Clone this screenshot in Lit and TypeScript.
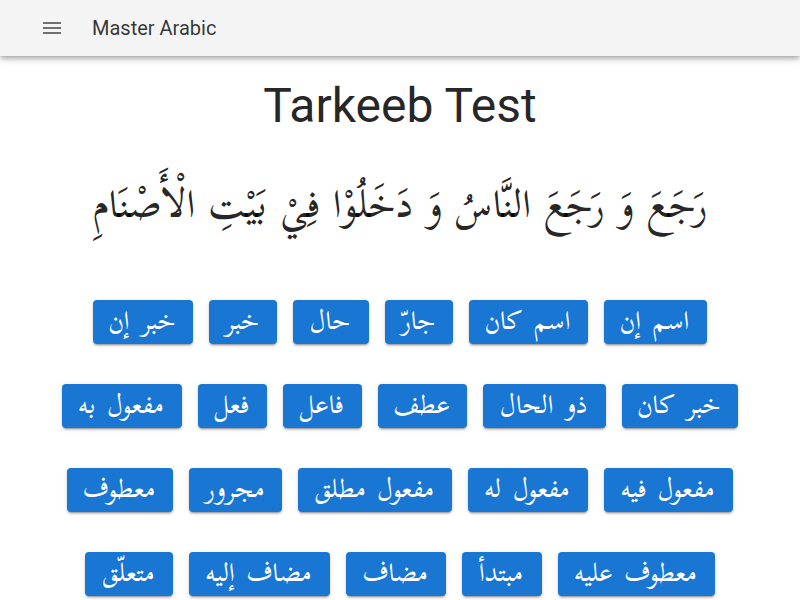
import { LitElement, html, css } from "lit";
import { customElement } from "lit/decorators.js";

const rows: { label: string; width: number }[][] = [
  [["اسم إن", 103], ["اسم كان", 119], ["جارّ", 68], ["حال", 76], ["خبر", 68], ["خبر إن", 100]],
  [["خبر كان", 116], ["ذو الحال", 123], ["عطف", 89], ["فاعل", 79], ["فعل", 69], ["مفعول به", 120]],
  [["مفعول فيه", 129], ["مفعول له", 120], ["مفعول مطلق", 154], ["مجرور", 93], ["معطوف", 106]],
  [["معطوف عليه", 157], ["مبتدأ", 80], ["مضاف", 100], ["مضاف إليه", 141], ["متعلّق", 88]],
].map((r) => r.map(([label, width]) => ({ label: label as string, width: width as number })));

@customElement("app-root")
export class AppRoot extends LitElement {
  static styles = css`
    :host { display: block; height: 600px; overflow: hidden; background: #fff; color: rgba(0, 0, 0, 0.87); font-family: Roboto, sans-serif; }
    header { height: 56px; box-sizing: border-box; padding: 0 40px; display: flex; align-items: center; background: #f4f4f4; position: relative;
      box-shadow: 0 2px 4px -1px rgba(0,0,0,.2), 0 4px 5px 0 rgba(0,0,0,.14), 0 1px 10px 0 rgba(0,0,0,.12); }
    header svg { width: 24px; height: 24px; fill: rgba(0, 0, 0, 0.54); margin-right: 28px; }
    .brand { font-size: 20px; line-height: 32px; letter-spacing: 0; color: rgba(0, 0, 0, 0.8); }
    h1 { font-weight: 400; font-size: 48px; line-height: 56px; margin: 22px 0 0; text-align: center; }
    .sentence { direction: rtl; text-align: center; font-family: "Scheherazade New", Amiri, "DejaVu Sans Condensed", "DejaVu Sans", serif; font-size: 38.5px; font-weight: 500; word-spacing: 3.3px; line-height: 72px; height: 72px; margin: 35px 0 59px; white-space: nowrap; }
    .row { direction: rtl; display: flex; justify-content: center; gap: 16px; margin-bottom: 40px; }
    button { height: 44px; padding: 0 0 2px; padding-right: 2px; border: 0; border-radius: 4px; background: #1976d2; color: #fff; font: 500 25.7px/40px "Scheherazade New", Amiri, "DejaVu Sans Condensed", "DejaVu Sans", serif; word-spacing: 5px; white-space: nowrap;
      box-shadow: 0 3px 1px -2px rgba(0,0,0,.2), 0 2px 2px 0 rgba(0,0,0,.14), 0 1px 5px 0 rgba(0,0,0,.12); }
  `;
  render() {
    return html`
      <header>
        <svg viewBox="0 0 24 24"><path d="M3 18h18v-2H3v2zm0-5h18v-2H3v2zm0-7v2h18V6H3z" /></svg>
        <div class="brand">Master Arabic</div>
      </header>
      <h1>Tarkeeb Test</h1>
      <div class="sentence">رَجَعَ وَ رَجَعَ النَّاسُ وَ دَخَلُوْا فِيْ بَيْتِ الْأَصْنَامِ</div>
      ${rows.map((r) => html`<div class="row">${r.map((b) => html`<button style="width:${b.width}px">${b.label}</button>`)}</div>`)}
    `;
  }
}
